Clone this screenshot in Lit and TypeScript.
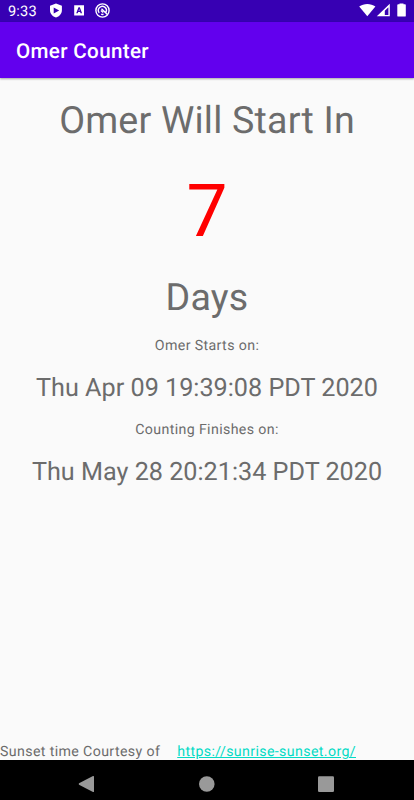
import { LitElement, html, css } from "lit";
import { customElement } from "lit/decorators.js";

@customElement("status-bar")
class StatusBar extends LitElement {
  static styles = css`
    :host { display: flex; align-items: center; height: 22px; box-sizing: border-box; background: #3700b3; color: #fff; padding: 0 5px 0 8px; }
    .time { font-size: 14.6px; line-height: 22px; width: 41px; letter-spacing: 0.15px; }
    svg { display: block; fill: #fff; }
    .left { flex: 1; }
  `;
  render() {
    return html`
      <span class="time">9:33</span>
      <svg class="left" height="22" viewBox="49 0 310 22" preserveAspectRatio="xMinYMid meet">
        <path fill-rule="evenodd" d="M56 3.6L61.9 5.7V10.2C61.9 13.7 59.4 16.4 56 17.4C52.6 16.4 50 13.7 50 10.2V5.7ZM53.7 7.4V13.4L59.2 10.4Z"/>
        <path fill-rule="evenodd" d="M74.2 5.2H84V15.6H74.2ZM76.2 13.2H77.7L78.2 11.9H80.1L80.6 13.2H82.1L79.8 7.2H78.5ZM78.6 10.8L79.15 9L79.7 10.8Z"/>
        <circle cx="102.5" cy="10.5" r="6.6" fill="none" stroke="#fff" stroke-width="1.4"/>
        <path d="M99.2 12.8A4 4 0 1 1 105.9 12.3M101.2 14.2A4 4 0 0 0 103.5 14.3M101.5 8.7L107.4 14.4M100.9 10.4L103.2 12.6" fill="none" stroke="#fff" stroke-width="1.4"/>
      </svg>
      <svg width="50" height="22" viewBox="359 0 50 22">
        <path d="M359.2 6.5C363.8 3 370.8 3 375.4 6.5L367.3 16.2Z"/>
        <path fill-rule="evenodd" d="M389.8 3.8V16.2H376.8ZM388.4 7.3L384.8 10.8V14.9H388.4Z"/>
        <path d="M399.5 4.3V3.5H403.5V4.3H405Q405.8 4.3 405.8 5.1V15.7Q405.8 16.6 405 16.6H398.2Q397.3 16.6 397.3 15.7V5.1Q397.3 4.3 398.2 4.3Z"/>
      </svg>
    `;
  }
}

@customElement("nav-bar")
class NavBar extends LitElement {
  static styles = css`
    :host { display: block; height: 40px; background: #000; }
    svg { display: block; fill: #999; }
  `;
  render() {
    return html`
      <svg width="414" height="40" viewBox="0 760 414 40">
        <path d="M79 783.3L93 776.1Q94 775.7 94 776.6V791.4Q94 792.3 93 791.9L79 784.7Q78.4 784 79 783.3Z"/>
        <circle cx="206.8" cy="784" r="7.8"/>
        <rect x="318" y="776.2" width="16" height="15.8" rx="1.2"/>
      </svg>
    `;
  }
}

@customElement("app-root")
class AppRoot extends LitElement {
  static styles = css`
    :host { display: flex; flex-direction: column; width: 414px; height: 800px; overflow: hidden; background: #fafafa; color: #6c6c6c; font-family: Roboto, sans-serif; text-rendering: geometricPrecision; }
    .bar { position: relative; display: flex; align-items: center; height: 56px; padding: 4px 16px 0; box-sizing: border-box; background: #6200ee; color: #fff; font-size: 20.6px; font-weight: 500; letter-spacing: 0.35px; box-shadow: 0 1px 2px rgba(0, 0, 0, 0.35); }
    main { flex: 1; display: flex; flex-direction: column; align-items: center; white-space: nowrap; }
    .big { font-size: 37.6px; line-height: 44px; margin-top: 21px; letter-spacing: 0.2px; }
    .count { font-size: 73px; line-height: 84px; margin-top: 26px; color: #f00; }
    .days { margin-top: 23px; }
    .label { font-size: 14.2px; line-height: 18px; margin-top: 17px; letter-spacing: 0.37px; }
    .date { font-size: 25.2px; line-height: 30px; margin-top: 19px; }
    .second { margin-top: 17px; }
    .credit { display: flex; gap: 17px; align-self: stretch; margin-top: auto; margin-bottom: -1px; font-size: 14.2px; line-height: 18px; letter-spacing: 0.37px; }
    a { color: #03dac5; text-decoration: underline; }
  `;
  render() {
    return html`
      <status-bar></status-bar>
      <div class="bar">Omer Counter</div>
      <main>
        <div class="big">Omer Will Start In</div>
        <div class="count">7</div>
        <div class="big days">Days</div>
        <div class="label">Omer Starts on:</div>
        <div class="date">Thu Apr 09 19:39:08 PDT 2020</div>
        <div class="label second">Counting Finishes on:</div>
        <div class="date">Thu May 28 20:21:34 PDT 2020</div>
        <div class="credit"><span>Sunset time Courtesy of</span><a href="https://sunrise-sunset.org/">https://sunrise-sunset.org/</a></div>
      </main>
      <nav-bar></nav-bar>
    `;
  }
}
